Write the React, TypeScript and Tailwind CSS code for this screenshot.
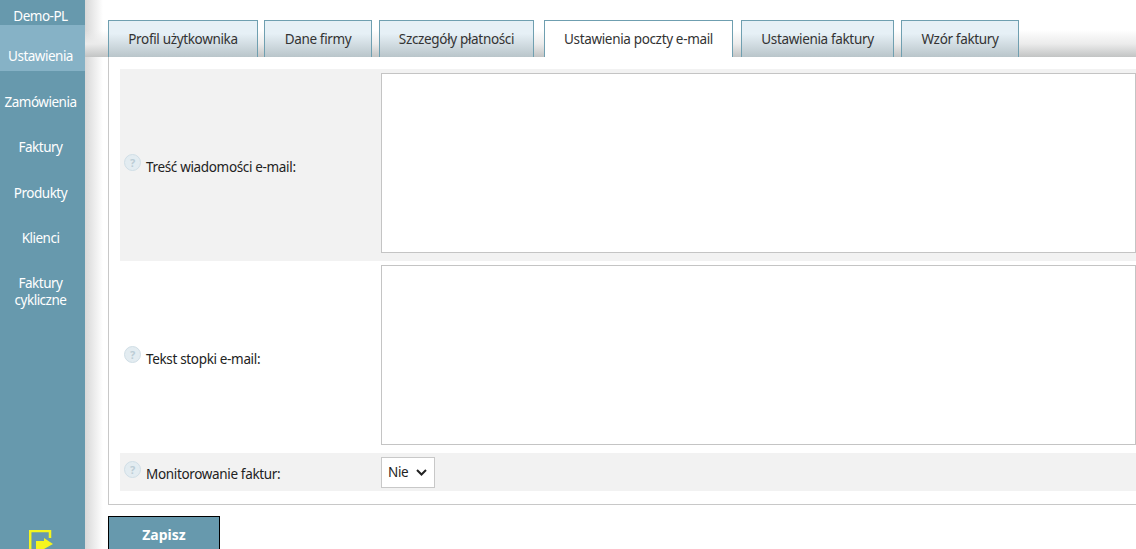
const tabs = [
  { label: 'Profil użytkownika', w: 'w-[150px]', mr: 'mr-[6px]' },
  { label: 'Dane firmy', w: 'w-[108px]', mr: 'mr-[7px]' },
  { label: 'Szczegóły płatności', w: 'w-[155px]', mr: 'mr-[10px]' },
  { label: 'Ustawienia poczty e-mail', w: 'w-[189px]', mr: 'mr-[8px]', active: true },
  { label: 'Ustawienia faktury', w: 'w-[153px]', mr: 'mr-[7px]' },
  { label: 'Wzór faktury', w: 'w-[118px]', mr: '' },
];

const menu = ['Zamówienia', 'Faktury', 'Produkty', 'Klienci'];

function HelpIcon() {
  return (
    <span className="flex h-[17px] w-[17px] shrink-0 items-center justify-center rounded-full border border-[#d0dee6] bg-[#e3ecf1] text-[11px] font-bold leading-none tracking-normal text-[#bccdd6]">
      ?
    </span>
  );
}

function Label({ text }: { text: string }) {
  return (
    <div className="flex w-[261px] shrink-0 items-center pl-[4px]">
      <span className="-mt-[6px]">
        <HelpIcon />
      </span>
      <span className="ml-[5px] mt-[5px] text-[#222]">{text}</span>
    </div>
  );
}

export default function App() {
  return (
    <div className="flex h-[549px] w-[1136px] overflow-hidden bg-white font-['Noto_Sans','Open_Sans',sans-serif] text-[13.5px] tracking-[-0.34px]">
      <aside className="flex w-[85px] shrink-0 flex-col bg-[#6799ad] text-center text-[13.5px] leading-[17px] tracking-[-0.5px] text-white">
        <div className="flex h-[25px] items-end justify-center pr-[4px]">Demo-PL</div>
        <div className="flex h-[46px] items-end justify-center bg-[#86b2c6] pb-[6px] pr-[4px]">Ustawienia</div>
        {menu.map((item) => (
          <div key={item} className="flex h-[45.5px] items-end justify-center whitespace-nowrap pb-[6px] pr-[4px]">
            {item}
          </div>
        ))}
        <div className="mt-[22px] pr-[4px]">
          Faktury
          <br />
          cykliczne
        </div>
        <div className="mt-auto flex justify-center pr-[4px]">
          <svg width="24" height="19" viewBox="0 0 24 19">
            <path d="M1 19V1H21V8" fill="none" stroke="#f5f51e" strokeWidth="2.5" />
            <path d="M1 19V1" fill="none" stroke="#f5f51e" strokeWidth="2.5" />
            <path d="M7 11h8V8l9 6-9 5h-8z" fill="#f5f51e" />
          </svg>
        </div>
      </aside>

      <main className="min-w-0 flex-1 bg-gradient-to-r from-[#d8d8d8] via-white via-[18px] to-white pl-[23px]">
        <div className="-ml-[23px] flex h-[57px] items-end bg-[linear-gradient(to_bottom,transparent_30px,#ebebeb_44px,#c2c4c4_57px)] pl-[23px]">
          {tabs.map((tab) => (
            <div
              key={tab.label}
              className={`flex h-[37px] shrink-0 items-center justify-center border border-b-0 border-[#6f9fb0] text-[#333] ${tab.w} ${tab.mr} ${
                tab.active
                  ? 'bg-white'
                  : 'bg-[linear-gradient(to_bottom,#e6f0f6_35%,#b9c5ca_100%)]'
              }`}
            >
              {tab.label}
            </div>
          ))}
        </div>

        <div className="h-[448px] border-b border-l border-[#c8c8c8] bg-white pl-[11px] pt-[12px]">
          <div className="flex h-[192px] bg-[#f2f2f2]">
            <Label text="Treść wiadomości e-mail:" />
            <div className="mt-[4px] h-[180px] flex-1 border border-[#c4c4c4] bg-white" />
          </div>
          <div className="flex h-[192px]">
            <Label text="Tekst stopki e-mail:" />
            <div className="mt-[4px] h-[180px] flex-1 border border-[#c4c4c4] bg-white" />
          </div>
          <div className="flex h-[38px] bg-[#f2f2f2]">
            <Label text="Monitorowanie faktur:" />
            <div className="mt-[4px] flex h-[31px] w-[54px] items-center justify-between border border-[#c8c8c8] bg-white pl-[6px] pr-[7px] text-[#222]">
              Nie
              <svg width="11" height="7" viewBox="0 0 11 7">
                <path d="M1 1l4.5 4.5L10 1" fill="none" stroke="#222" strokeWidth="2" />
              </svg>
            </div>
          </div>
        </div>

        <button className="mt-[11px] flex h-[40px] w-[112px] justify-center border border-black bg-[#6799ad] pt-[11px] text-[14px] font-bold leading-none tracking-normal text-white">
          Zapisz
        </button>
      </main>
    </div>
  );
}
